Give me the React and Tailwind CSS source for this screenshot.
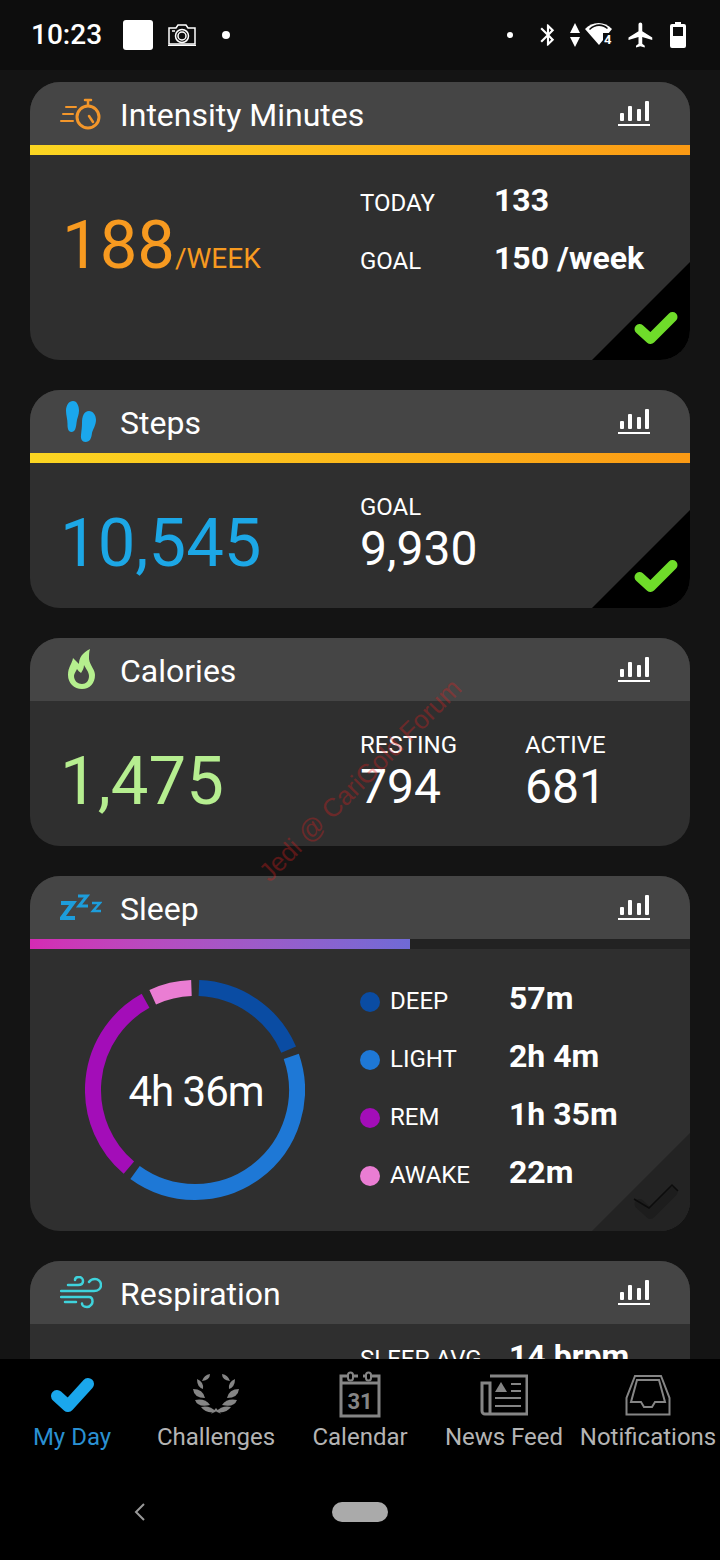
import React from 'react'

const font = { fontFamily: 'Roboto, sans-serif' }

const polar = (r, deg) => {
  const a = (deg * Math.PI) / 180
  return [110 + r * Math.sin(a), 110 - r * Math.cos(a)]
}

const arc = (from, to) => {
  const [x1, y1] = polar(102, from)
  const [x2, y2] = polar(102, to)
  return `M${x1} ${y1}A102 102 0 ${to - from > 180 ? 1 : 0} 1 ${x2} ${y2}`
}

const ChartIcon = () => (
  <svg className="mb-[2px]" width="32" height="26" viewBox="0 0 32 26" fill="#fff">
    <rect x="2" y="13" width="4" height="8" rx="1" />
    <rect x="10" y="6" width="4" height="15" rx="1" />
    <rect x="19" y="9" width="4" height="12" rx="1" />
    <rect x="27" y="1" width="4" height="20" rx="1" />
    <rect x="0" y="24" width="32" height="2" />
  </svg>
)

const TimerIcon = () => (
  <svg width="42" height="32" viewBox="0 0 42 32" fill="none" stroke="#f3962a" strokeWidth="2.5" strokeLinecap="round">
    <path d="M6 9h10M3 16h10M1 23h12" strokeWidth="2" />
    <circle cx="28" cy="19" r="11" strokeWidth="3" />
    <path d="M25 2h6M28 2v5M29 18l4 6" />
  </svg>
)

const FeetIcon = () => (
  <svg className="ml-[6px]" width="30" height="41" viewBox="0 0 30 41" fill="#1aa7ec">
    <path d="M7 0C11 0 13 5 13 10C13 14 11 17 10.500 22C10 27 9 31 5.500 31C2 31 1.500 27 1.500 23C1.500 18 0 14 0 10C0 4 3 0 7 0z" />
    <path d="M23 10C27 10 30 14 30 19C30 24 27 28 26 32C25.500 37 24 41 19.500 41C16 41 14.500 38 15 34C15.500 29 16 26 16 22C16 15 18 10 23 10z" />
  </svg>
)

const FlameIcon = () => (
  <svg className="ml-[8px]" width="28" height="41" viewBox="0 0 28 41">
    <path d="M22 0C14 4 11 9 11 15C9 13 7 11 5 9C4 15 0 18 0 26C0 34 6 40 14 40C22 40 27 34 27 26C27 20 22 17 21 10C21 6 21 3 22 0z" fill="#b5ef8e" />
    <path d="M9 20C10 22 12 23 13 24C14 22 16 20 16 16C18 20 21 23 21 27C21 32 18 35 14 35C10 35 6 32 6 27C6 25 8 22 9 20z" fill="#454545" />
  </svg>
)

const ZzzIcon = () => (
  <svg width="42" height="28" viewBox="0 0 42 28" fill="none" stroke="#1d9ddb" strokeLinejoin="miter">
    <path d="M1 9h12L2 24h13" strokeWidth="4" />
    <path d="M18 2h9l-8 10h9" strokeWidth="3" />
    <path d="M32 9h8l-7 8h8" strokeWidth="2.500" />
  </svg>
)

const WindIcon = () => (
  <svg width="42" height="33" viewBox="0 0 42 33" fill="none" stroke="#3fd3dc" strokeWidth="2.500" strokeLinecap="round">
    <path d="M8 9h10c3 0 5-1.500 5-4s-2-4-4-4-4 1-4 3" />
    <path d="M1 15h33c4 0 7-2.500 7-6s-3-6-6-6-5 1.500-6 3" />
    <path d="M1 21h28c3 0 3.500 3 3.500 4.500S31 31 27 31s-5-2.500-5-3.500" />
    <path d="M5 26h11" />
  </svg>
)

const Check = () => (
  <svg className="absolute bottom-0 right-0" width="98" height="98" viewBox="0 0 98 98">
    <path d="M0 98L98 0V98z" fill="#000" />
    <path d="M47.500 67l11 10 22-22" fill="none" stroke="#6fdc2a" strokeWidth="10" strokeLinecap="round" strokeLinejoin="round" />
  </svg>
)

const DimCheck = () => (
  <svg className="absolute bottom-0 right-0" width="98" height="98" viewBox="0 0 98 98">
    <path d="M0 98L98 0V98z" fill="#232323" />
    <path d="M47.500 71l11 10 22-22" fill="none" stroke="#1d1d1d" strokeWidth="10" strokeLinecap="round" strokeLinejoin="round" />
    <path d="M42 66l15 9 23-23 6 6" fill="none" stroke="#0c0c0c" strokeWidth="1.500" />
  </svg>
)

const Card = ({ icon, title, bar, bodyClass, children }) => (
  <section className="relative shrink-0 overflow-hidden rounded-[30px] bg-[#2f2f2f]">
    <div className="flex h-[63px] items-center justify-between bg-[#454545] pr-[40px]">
      <div className="flex items-center">
        <div className="flex w-[90px] justify-start pl-[30px]">{icon}</div>
        <h2 className="pt-[2px] text-[32px] leading-none text-white">{title}</h2>
      </div>
      <ChartIcon />
    </div>
    {bar}
    <div className={bodyClass}>{children}</div>
  </section>
)

const GoalBar = () => <div className="h-[10px] bg-gradient-to-r from-[#fbd622] to-[#fb9a14]" />

const Big = ({ className, children }) => (
  <span className={`text-[67px] leading-none ${className}`}>{children}</span>
)

const Label = ({ children }) => <div className="text-[24px] leading-none text-white">{children}</div>

const sleepRows = [
  ['bg-[#0a4ca3]', 'DEEP', '57m'],
  ['bg-[#1e78d6]', 'LIGHT', '2h 4m'],
  ['bg-[#a30db8]', 'REM', '1h 35m'],
  ['bg-[#ea7dd3]', 'AWAKE', '22m'],
]

const NavItem = ({ label, active, children }) => (
  <div className="flex flex-col items-center">
    <div className="flex h-[59px] items-end">{children}</div>
    <div className={`mt-[5px] whitespace-nowrap text-[24px] leading-[28px] ${active ? 'text-[#2a90d2]' : 'text-[#b4b4b4]'}`}>{label}</div>
  </div>
)

const leaves = [
  'M38 7Q36 1 30 0Q30 6 38 7z',
  'M37 15Q43 13 43 5Q36 8 37 15z',
  'M35 24Q46 24 47 15Q37 15 35 24z',
  'M30 31Q42 34 45 26Q35 24 30 31z',
  'M24 38Q34 40 39 33Q30 31 24 38z',
]

const Laurel = () => (
  <svg className="mb-[3px]" width="48" height="41" viewBox="0 0 48 41" fill="#858585">
    {leaves.map((d) => (
      <g key={d}>
        <path d={d} />
        <path transform="translate(48 0) scale(-1 1)" d={d} />
      </g>
    ))}
    <path d="M19 40l5-6 5 6-5-3z" />
  </svg>
)

export default function App() {
  return (
    <div style={font} className="relative flex h-[1560px] w-[720px] flex-col overflow-hidden bg-[#141414]">
      <header className="flex h-[70px] shrink-0 items-center justify-between bg-[#0d0d0d] pl-[31px] pr-[34px]">
        <div className="flex items-center">
          <span className="text-[28px] font-medium leading-none text-white">10:23</span>
          <div className="ml-[21px] h-[30px] w-[30px] rounded-[3px] bg-white" />
          <svg className="ml-[15px]" width="28" height="22" viewBox="0 0 28 22" fill="none" stroke="#fff" strokeWidth="1.500">
            <path d="M1 4h7l2-3h8l2 3h7v16H1z" />
            <circle cx="14" cy="12" r="6.500" />
            <circle cx="14" cy="12" r="4" />
            <path d="M4 7h3" />
            <path d="M0 21.500h28" />
          </svg>
          <div className="ml-[26px] h-[8px] w-[8px] rounded-full bg-white" />
        </div>
        <div className="flex items-center">
          <div className="mr-[22px] h-[6px] w-[6px] rounded-full bg-white" />
          <svg width="26" height="28" viewBox="0 0 24 24" fill="#fff" className="mr-[9px]">
            <path d="M17.710 7.710L12 2h-1v7.590L6.410 5 5 6.410 10.590 12 5 17.590 6.410 19 11 14.410V22h1l5.710-5.710-4.300-4.290 4.300-4.290zM13 5.830l1.880 1.880L13 9.590V5.830zm1.880 10.460L13 18.170v-3.760l1.880 1.880z" />
          </svg>
          <svg width="10" height="24" viewBox="0 0 10 24" fill="#fff" className="mr-[5px]">
            <path d="M5 0l5 10H0zM5 24L0 14h10z" />
          </svg>
          <svg width="28" height="26" viewBox="0 0 28 26" className="mr-[13px]">
            <path d="M0 7C7-1 20-1 27 7L14 23z" fill="#fff" />
            <path d="M4 7C10 1 18 1 23 6l-1 1C17 3 10 3 5 8z" fill="#0d0d0d" />
            <rect x="18" y="11" width="10" height="14" fill="#0d0d0d" />
            <text x="19" y="22" fontSize="13" fontWeight="700" fill="#fff">4</text>
          </svg>
          <svg width="30" height="30" viewBox="0 0 24 24" fill="#fff" className="mr-[14px]">
            <path d="M21 16v-2l-8-5V3.500c0-.830-.670-1.500-1.500-1.500S10 2.670 10 3.500V9l-8 5v2l8-2.500V19l-2 1.500V22l3.500-1 3.500 1v-1.500L13 19v-5.500l8 2.500z" />
          </svg>
          <svg width="16" height="26" viewBox="0 0 16 26">
            <path d="M5 0h6v2h3a2 2 0 012 2v20a2 2 0 01-2 2H2a2 2 0 01-2-2V4a2 2 0 012-2h3z" fill="#fff" />
            <rect x="3" y="5" width="10" height="9" fill="#0d0d0d" />
          </svg>
        </div>
      </header>

      <main className="flex h-[1289px] shrink-0 flex-col gap-[30px] overflow-hidden px-[30px] pt-[12px]">
        <Card icon={<TimerIcon />} title="Intensity Minutes" bar={<GoalBar />} bodyClass="flex h-[205px]">
          <div className="flex w-[330px] items-baseline self-start pl-[32px] pt-[57px]">
            <Big className="text-[#f79a20]">188</Big>
            <span className="text-[28px] leading-none text-[#f79a20]">/WEEK</span>
          </div>
          <div className="grid grid-cols-[134px_auto] items-baseline gap-y-[26px] self-start pt-[29px]">
            <Label>TODAY</Label>
            <div className="text-[32px] font-bold leading-none text-white">133</div>
            <Label>GOAL</Label>
            <div className="text-[32px] font-bold leading-none text-white">150 /week</div>
          </div>
          <Check />
        </Card>

        <Card icon={<FeetIcon />} title="Steps" bar={<GoalBar />} bodyClass="flex h-[145px]">
          <div className="w-[330px] pl-[30px] pt-[47px]">
            <Big className="text-[#1ca7e6]">10,545</Big>
          </div>
          <div className="pt-[32px]">
            <Label>GOAL</Label>
            <div className="mt-[6px] text-[48px] leading-none text-white">9,930</div>
          </div>
          <Check />
        </Card>

        <Card icon={<FlameIcon />} title="Calories" bodyClass="flex h-[145px]">
          <div className="w-[330px] pl-[30px] pt-[47px]">
            <Big className="text-[#b6ee90]">1,475</Big>
          </div>
          <div className="w-[165px] pt-[32px]">
            <Label>RESTING</Label>
            <div className="mt-[6px] text-[48px] leading-none text-white">794</div>
          </div>
          <div className="pt-[32px]">
            <Label>ACTIVE</Label>
            <div className="mt-[6px] text-[48px] leading-none text-white">681</div>
          </div>
        </Card>

        <Card
          icon={<ZzzIcon />}
          title="Sleep"
          bar={
            <div className="h-[10px] bg-[#222222]">
              <div className="h-full w-[380px] bg-gradient-to-r from-[#d42ab4] to-[#6f6ad6]" />
            </div>
          }
          bodyClass="flex h-[282px]"
        >
          <div className="relative ml-[55px] mt-[31px] h-[220px] w-[220px] shrink-0">
            <svg width="220" height="220" viewBox="0 0 220 220" fill="none" strokeWidth="16">
              <path d={arc(2.200, 66.700)} stroke="#0a4ca3" />
              <path d={arc(70.700, 216)} stroke="#1e78d6" />
              <path d={arc(220.400, 331)} stroke="#a30db8" />
              <path d={arc(335.500, 358)} stroke="#ea7dd3" />
            </svg>
            <div className="absolute inset-0 flex items-center justify-center pl-[2px] pt-[2px] text-[42px] tracking-[-1px] text-white">4h 36m</div>
          </div>
          <div className="ml-[55px] flex flex-col gap-[26px] pt-[33px]">
            {sleepRows.map(([dot, name, value]) => (
              <div key={name} className="flex items-baseline">
                <div className={`mr-[10px] h-[20px] w-[20px] translate-y-[3px] rounded-full ${dot}`} />
                <div className="w-[119px] text-[24px] leading-none text-white">{name}</div>
                <div className="text-[32px] font-bold leading-none text-white">{value}</div>
              </div>
            ))}
          </div>
          <DimCheck />
        </Card>

        <Card icon={<WindIcon />} title="Respiration" bodyClass="h-[145px] pl-[330px] pt-[16px]">
          <div className="flex items-baseline">
            <div className="w-[149px] text-[24px] leading-none text-white">SLEEP AVG</div>
            <div className="text-[32px] font-bold leading-none text-white">14 brpm</div>
          </div>
        </Card>
      </main>

      <nav className="flex-1 bg-black">
        <div className="grid h-[109px] grid-cols-5">
          <NavItem label="My Day" active>
            <svg className="mb-[6px]" width="46" height="36" viewBox="0 0 46 36" fill="none" stroke="#1aa7ec" strokeWidth="12" strokeLinecap="round" strokeLinejoin="round">
              <path d="M8 20l11 10L39 8" />
            </svg>
          </NavItem>
          <NavItem label="Challenges">
            <Laurel />
          </NavItem>
          <NavItem label="Calendar">
            <svg width="42" height="47" viewBox="0 0 42 47" fill="none" stroke="#858585" strokeWidth="3">
              <path d="M9 5H2v40h38V5h-7M15 5h4M24 5h3" />
              <rect x="9" y="1.500" width="5" height="8" rx="2.500" strokeWidth="2" />
              <rect x="27" y="1.500" width="5" height="8" rx="2.500" strokeWidth="2" />
              <path d="M2 12h38" />
              <text x="21" y="38" textAnchor="middle" fontSize="22" fontWeight="700" fill="#858585" stroke="none">31</text>
            </svg>
          </NavItem>
          <NavItem label="News Feed">
            <svg className="mb-[2px]" width="48" height="42" viewBox="0 0 48 42" fill="none" stroke="#858585" strokeWidth="3">
              <path d="M10 2h37v38H5a3 3 0 01-3-3V9h8v30" />
              <path d="M21 8l6 10H15z" fill="#858585" stroke="none" />
              <path d="M31 10h10M31 17h10M15 24h26M15 32h26" strokeWidth="2" />
            </svg>
          </NavItem>
          <NavItem label="Notifications">
            <svg className="mb-[2px]" width="46" height="42" viewBox="0 0 46 42" fill="none" stroke="#858585" strokeWidth="2">
              <path d="M1.500 40.500V24L10 2h26l8.500 22v16.500z" />
              <path d="M6 28L12 6h22l6 22H30l-3 5h-8l-3-5z" />
            </svg>
          </NavItem>
        </div>
        <div className="relative mt-[32px] h-[24px]">
          <svg className="absolute left-[132px] top-[2px]" width="14" height="20" viewBox="0 0 14 20" fill="none" stroke="#999" strokeWidth="2">
            <path d="M12 2L4 10l8 8" />
          </svg>
          <div className="absolute left-[332px] top-[2px] h-[20px] w-[56px] rounded-full bg-[#aaaaaa]" />
        </div>
      </nav>

      <div
        style={{ fontFamily: '"Liberation Sans", sans-serif' }}
        className="absolute left-[360px] top-[780px] -translate-x-1/2 -translate-y-1/2 -rotate-45 whitespace-nowrap text-[26px] leading-none text-[#e02020]/35"
      >
        Jedi @ CariGold Forum
      </div>
    </div>
  )
}
